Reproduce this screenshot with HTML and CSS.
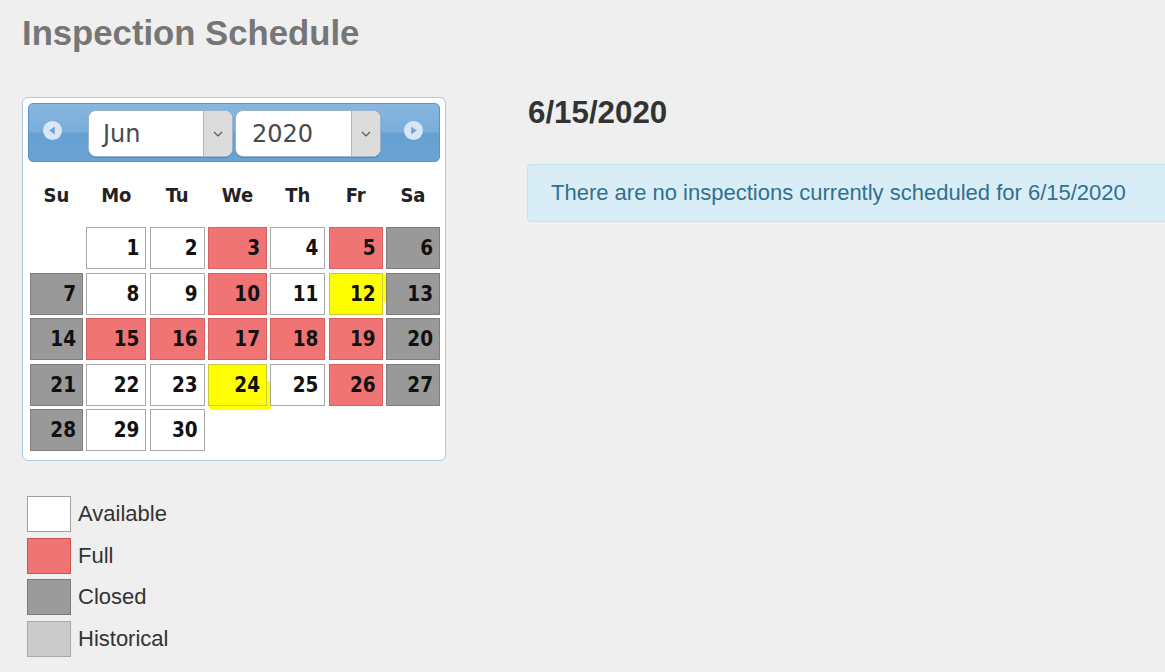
FILE: index.html
```html
<!DOCTYPE html>
<html lang="en">
<head>
<meta charset="utf-8">
<title>Inspection Schedule</title>
<link rel="stylesheet" href="styles.css">
</head>
<body>
<div class="page">
  <h1 class="title">Inspection Schedule</h1>
  <div class="main">
    <div class="left">
      <div class="calendar">
        <div class="cal-header">
          <span class="nav nav-prev">
            <svg width="19" height="19" viewBox="0 0 19 19"><circle cx="9.5" cy="9.5" r="9.5" fill="#dae6f3"/><path d="M6.2 9.5 L11.8 5.6 L11.8 13.4 Z" fill="#6fa5d6"/></svg>
          </span>
          <div class="select select-month">
            <span class="select-text">Jun</span>
            <span class="select-btn"><svg width="10" height="6" viewBox="0 0 10 6"><path d="M1 1 L5 5 L9 1" fill="none" stroke="#555" stroke-width="1.1"/></svg></span>
          </div>
          <div class="select select-year">
            <span class="select-text">2020</span>
            <span class="select-btn"><svg width="10" height="6" viewBox="0 0 10 6"><path d="M1 1 L5 5 L9 1" fill="none" stroke="#555" stroke-width="1.1"/></svg></span>
          </div>
          <span class="nav nav-next">
            <svg width="19" height="19" viewBox="0 0 19 19"><circle cx="9.5" cy="9.5" r="9.5" fill="#dae6f3"/><path d="M12.8 9.5 L7.2 5.6 L7.2 13.4 Z" fill="#6fa5d6"/></svg>
          </span>
        </div>
        <div class="weekdays">
          <span>Su</span><span>Mo</span><span>Tu</span><span>We</span><span>Th</span><span>Fr</span><span>Sa</span>
        </div>
        <div class="days">
          <span class="empty"></span>
          <span class="day avail">1</span>
          <span class="day avail">2</span>
          <span class="day full">3</span>
          <span class="day avail">4</span>
          <span class="day full">5</span>
          <span class="day closed">6</span>

          <span class="day closed">7</span>
          <span class="day avail">8</span>
          <span class="day avail">9</span>
          <span class="day full">10</span>
          <span class="day avail">11</span>
          <span class="day marked mark-a">12</span>
          <span class="day closed">13</span>

          <span class="day closed">14</span>
          <span class="day full">15</span>
          <span class="day full">16</span>
          <span class="day full">17</span>
          <span class="day full">18</span>
          <span class="day full">19</span>
          <span class="day closed">20</span>

          <span class="day closed">21</span>
          <span class="day avail">22</span>
          <span class="day avail">23</span>
          <span class="day marked mark-b">24</span>
          <span class="day avail">25</span>
          <span class="day full">26</span>
          <span class="day closed">27</span>

          <span class="day closed">28</span>
          <span class="day avail">29</span>
          <span class="day avail">30</span>
        </div>
      </div>

      <ul class="legend">
        <li><span class="swatch sw-avail"></span>Available</li>
        <li><span class="swatch sw-full"></span>Full</li>
        <li><span class="swatch sw-closed"></span>Closed</li>
        <li><span class="swatch sw-hist"></span>Historical</li>
      </ul>
    </div>

    <div class="right">
      <h2 class="date-title">6/15/2020</h2>
      <div class="alert">There are no inspections currently scheduled for 6/15/2020</div>
    </div>
  </div>
</div>
</body>
</html>
```

FILE: styles.css
```css
html, body {
  margin: 0;
  padding: 0;
}

body {
  background: #efefef;
  font-family: "Liberation Sans", Arial, sans-serif;
  color: #333;
  overflow: hidden;
}

.page {
  padding-left: 22px;
}

.title {
  margin: 13px 0 0 0;
  font-size: 34.7px;
  line-height: 40px;
  font-weight: bold;
  color: #767676;
}

.main {
  display: flex;
  margin-top: 44px;
}

.left {
  width: 424px;
  flex: none;
}

.calendar {
  box-sizing: border-box;
  width: 424px;
  height: 364px;
  background: #fff;
  border: 1px solid #aacbe3;
  border-radius: 6px;
  padding: 5px;
}

.cal-header {
  box-sizing: border-box;
  height: 59px;
  display: flex;
  align-items: center;
  padding-top: 2px;
  border: 1px solid #5a95c8;
  border-radius: 5px;
  background: linear-gradient(#86b6df 0%, #7aaedb 48%, #66a0d2 52%, #6aa3d4 100%);
}

.nav {
  display: flex;
  width: 19px;
  height: 19px;
  margin-bottom: 6px;
}

.nav-prev {
  margin-left: 14px;
  margin-right: 26px;
}

.nav-next {
  margin-left: 23px;
}

.select {
  box-sizing: border-box;
  display: flex;
  height: 47px;
  background: #fff;
  border: 1px solid #9fb3c6;
  border-radius: 8px;
  overflow: hidden;
  box-shadow: 0 1px 1px rgba(0, 0, 0, 0.15);
}

.select-month {
  width: 145px;
  margin-right: 2px;
}

.select-year {
  width: 146px;
}

.select-text {
  flex: 1;
  padding-left: 14px;
  font-family: "DejaVu Sans", Verdana, sans-serif;
  font-size: 24px;
  line-height: 47px;
  color: #4a4a4a;
}

.select-year .select-text {
  padding-left: 16px;
}

.select-btn {
  width: 28px;
  display: flex;
  align-items: center;
  justify-content: center;
  background: #dcdcdc;
  border-left: 1px solid #b5b5b5;
}

.weekdays {
  display: grid;
  grid-template-columns: 53px 60px 55px 59px 55px 54px 54px;
  column-gap: 3.33px;
  height: 65px;
  align-items: center;
  padding-left: 2px;
  font-family: "DejaVu Sans Condensed", "DejaVu Sans", sans-serif;
  font-weight: bold;
  font-size: 20px;
  color: #222;
}

.weekdays span {
  text-align: center;
}

.days {
  isolation: isolate;
  display: grid;
  grid-template-columns: 53px 60px 55px 59px 55px 54px 54px;
  grid-auto-rows: 42px;
  column-gap: 3.33px;
  row-gap: 3.5px;
  padding-left: 2px;
  font-family: "DejaVu Sans Condensed", "DejaVu Sans", sans-serif;
  font-weight: bold;
  font-size: 20.5px;
  color: #111;
}

.day {
  position: relative;
  box-sizing: border-box;
  border: 1px solid #a3a3a3;
  padding-right: 6px;
  text-align: right;
  line-height: 40px;
}

.avail {
  background: #fff;
  border-color: #a8a8a8;
}

.full {
  background: #f07474;
  border-color: #d46060;
}

.closed {
  background: #999;
  border-color: #7e7e7e;
}

.marked {
  background: #ffff00;
  border-color: #c9c93a;
}

.marked::after {
  content: "";
  position: absolute;
  z-index: -1;
  background: #ffff00;
}

.mark-a::after {
  right: -4px;
  top: 0;
  width: 8px;
  height: 29px;
  border-radius: 0 2px 3px 0;
}

.mark-b::after {
  left: 0;
  right: -5px;
  top: 16px;
  bottom: -5px;
  border-radius: 0 0 3px 3px;
}

.legend {
  list-style: none;
  margin: 35px 0 0 5px;
  padding: 0;
  display: flex;
  flex-direction: column;
  gap: 5.5px;
}

.legend li {
  display: flex;
  align-items: center;
  height: 36px;
  font-size: 22px;
  color: #333;
}

.swatch {
  box-sizing: border-box;
  width: 44px;
  height: 36px;
  margin-right: 7px;
  border: 1px solid #999;
}

.sw-avail {
  background: #fff;
  border-color: #a0a0a0;
}

.sw-full {
  background: #f07474;
  border-color: #c85454;
}

.sw-closed {
  background: #9b9b9b;
  border-color: #7a7a7a;
}

.sw-hist {
  background: #cbcbcb;
  border-color: #a9a9a9;
}

.right {
  flex: 1;
  margin-left: 81px;
  margin-top: -2px;
  margin-right: -40px;
}

.date-title {
  margin: 0 0 0 1px;
  font-size: 31.3px;
  line-height: 36px;
  font-weight: bold;
  color: #333;
}

.alert {
  box-sizing: border-box;
  margin-top: 33px;
  height: 58px;
  padding: 0 23px;
  background: #d9edf7;
  border: 1px solid #c4e3f0;
  border-radius: 4px;
  color: #31708f;
  font-size: 22px;
  line-height: 56px;
}
```
